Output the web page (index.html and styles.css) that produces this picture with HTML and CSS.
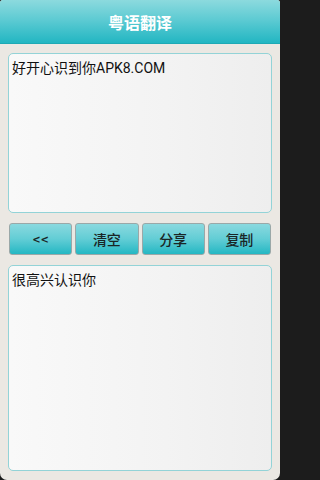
FILE: index.html
```html
<!DOCTYPE html>
<html lang="zh">
<head>
<meta charset="utf-8">
<title>粤语翻译</title>
<link rel="stylesheet" href="styles.css">
</head>
<body>
<div class="app">
  <header class="titlebar">粤语翻译</header>
  <main class="content">
    <div class="textbox input">好开心识到你APK8.COM</div>
    <div class="actions">
      <button class="btn btn-back">&lt;&lt;</button>
      <button class="btn">清空</button>
      <button class="btn">分享</button>
      <button class="btn">复制</button>
    </div>
    <div class="textbox output">很高兴认识你</div>
  </main>
</div>
</body>
</html>
```
FILE: styles.css
```css
html, body {
  margin: 0;
  padding: 0;
  background: #1c1c1c;
}
body {
  width: 280px;
  height: 480px;
  font-family: Roboto, "Noto Sans CJK SC", sans-serif;
}
.app {
  width: 280px;
  height: 480px;
  display: flex;
  flex-direction: column;
  background-color: #ebe8e3;
  border-radius: 3px 3px 7px 7px;
  overflow: hidden;
}
.titlebar {
  height: 44px;
  flex: none;
  display: flex;
  align-items: center;
  justify-content: center;
  color: #ffffff;
  font-size: 16px;
  font-weight: bold;
  background: linear-gradient(to bottom, #8cdade 0%, #5ecbd3 45%, #22b6c2 100%);
  border-bottom: 1px solid #1ea9b4;
  box-sizing: border-box;
}
.content {
  flex: 1;
  display: flex;
  flex-direction: column;
  gap: 10px;
  padding: 9px 8px 9px 8px;
  min-height: 0;
}
.textbox {
  box-sizing: border-box;
  border: 1px solid #93d3d7;
  border-radius: 5px;
  background: linear-gradient(to right, #f9f9f9 0%, #f3f3f3 60%, #eeeeee 100%);
  padding: 5px 3px;
  font-size: 14px;
  line-height: 18px;
  color: #111111;
}
.input {
  height: 160px;
  flex: none;
}
.output {
  flex: 1;
}
.actions {
  height: 32px;
  flex: none;
  display: flex;
  gap: 3px;
  padding: 0 1px;
}
.btn {
  flex: 1;
  box-sizing: border-box;
  margin: 0;
  border: 1px solid #9aa8a8;
  border-radius: 3px;
  background: linear-gradient(to bottom, #8ad9df 0%, #62cdd5 50%, #24b7c3 100%);
  color: #1a2626;
  font-family: Roboto, "Noto Sans CJK SC", sans-serif;
  font-size: 14px;
  font-weight: 500;
  padding: 0;
}
.btn-back {
  font-family: "DejaVu Sans", sans-serif;
  font-size: 10px;
  font-weight: bold;
  letter-spacing: 0;
  font-variant-ligatures: none;
  font-feature-settings: "liga" 0, "kern" 0;
}
```
